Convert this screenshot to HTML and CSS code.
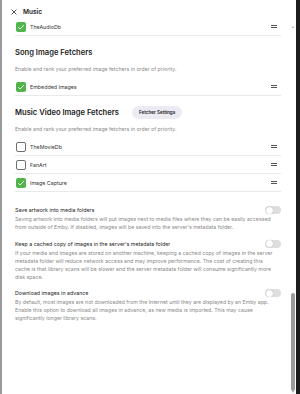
FILE: index.html
```html
<!DOCTYPE html>
<html lang="en">
<head>
    <meta charset="UTF-8">
    <meta name="viewport" content="width=device-width, initial-scale=1.0">
    <title>Music</title>
    <link rel="stylesheet" href="styles.css">
</head>
<body>
    <div class="dialog">
        <div class="dialog-header">
            <button class="close-btn" aria-label="Close">
                <svg viewBox="0 0 10 10" width="6" height="6"><path d="M1 1L9 9M9 1L1 9" stroke="#333" stroke-width="1.4" fill="none"/></svg>
            </button>
            <h1>Music</h1>
        </div>

        <div class="dialog-content">
            <div class="scroll-inner">
                <div class="fetcher-list">
                    <div class="fetcher-row">
                        <span class="checkbox checked"></span>
                        <span class="fetcher-name">TheAudioDb</span>
                        <span class="drag-handle"></span>
                    </div>
                </div>

                <div class="section">
                    <div class="section-heading">
                        <h2>Song Image Fetchers</h2>
                    </div>
                    <p class="section-desc">Enable and rank your preferred image fetchers in order of priority.</p>
                    <div class="fetcher-list">
                        <div class="fetcher-row">
                            <span class="checkbox checked"></span>
                            <span class="fetcher-name">Embedded Images</span>
                            <span class="drag-handle"></span>
                        </div>
                    </div>
                </div>

                <div class="section">
                    <div class="section-heading">
                        <h2>Music Video Image Fetchers</h2>
                        <button class="pill-btn">Fetcher Settings</button>
                    </div>
                    <p class="section-desc">Enable and rank your preferred image fetchers in order of priority.</p>
                    <div class="fetcher-list">
                        <div class="fetcher-row">
                            <span class="checkbox"></span>
                            <span class="fetcher-name">TheMovieDb</span>
                            <span class="drag-handle"></span>
                        </div>
                        <div class="fetcher-row">
                            <span class="checkbox"></span>
                            <span class="fetcher-name">FanArt</span>
                            <span class="drag-handle"></span>
                        </div>
                        <div class="fetcher-row">
                            <span class="checkbox checked"></span>
                            <span class="fetcher-name">Image Capture</span>
                            <span class="drag-handle"></span>
                        </div>
                    </div>
                </div>

                <div class="settings">
                    <div class="setting-item">
                        <div class="setting-title">Save artwork into media folders</div>
                        <span class="toggle"></span>
                        <p class="setting-desc">Saving artwork into media folders will put images next to media files where they can be easily accessed from outside of Emby. If disabled, images will be saved into the server's metadata folder.</p>
                    </div>
                    <div class="setting-item">
                        <div class="setting-title">Keep a cached copy of images in the server's metadata folder</div>
                        <span class="toggle"></span>
                        <p class="setting-desc">If your media and images are stored on another machine, keeping a cached copy of images in the server metadata folder will reduce network access and may improve performance. The cost of creating this cache is that library scans will be slower and the server metadata folder will consume significantly more disk space.</p>
                    </div>
                    <div class="setting-item">
                        <div class="setting-title">Download images in advance</div>
                        <span class="toggle"></span>
                        <p class="setting-desc">By default, most images are not downloaded from the Internet until they are displayed by an Emby app. Enable this option to download all images in advance, as new media is imported. This may cause significantly longer library scans.</p>
                    </div>
                </div>
            </div>
        </div>

        <div class="scrollbar">
            <span class="scroll-arrow up"></span>
            <span class="scroll-thumb"></span>
            <span class="scroll-arrow down"></span>
        </div>
    </div>
</body>
</html>
```

FILE: styles.css
```css
* {
    margin: 0;
    padding: 0;
    box-sizing: border-box;
}

html, body {
    height: 100%;
}

body {
    font-family: Inter, 'Noto Sans', sans-serif;
    background: linear-gradient(to right, #9a9a9a 0, #9a9a9a 50%, #1d1d1d 50%);
    overflow: hidden;
}

.dialog {
    position: relative;
    margin: 0 4px 0 2px;
    height: 100%;
    background-color: #fff;
    border-radius: 5px 5px 0 0;
    display: flex;
    flex-direction: column;
}

.dialog-header {
    height: 21px;
    flex-shrink: 0;
    display: flex;
    align-items: center;
    gap: 6px;
    padding: 2px 0 0 9px;
    background-color: #fff;
}

.close-btn {
    border: none;
    background: none;
    width: 6px;
    height: 6px;
    display: flex;
}

.dialog-header h1 {
    font-size: 6.5px;
    font-weight: 600;
    color: #222;
}

.dialog-content {
    flex: 1;
    overflow: hidden;
    padding: 0 15px 0 13px;
}

.scroll-inner {
    margin-top: -3px;
}

.fetcher-list {
    display: flex;
    flex-direction: column;
}

.fetcher-row {
    height: 18px;
    display: flex;
    align-items: center;
    gap: 4px;
    padding-left: 1px;
    border-bottom: 1px solid #e9e9e9;
}

.checkbox {
    width: 10px;
    height: 10px;
    border: 1px solid #707070;
    border-radius: 2px;
    flex-shrink: 0;
}

.checkbox.checked {
    border: none;
    background: #52b54b url("data:image/svg+xml,%3Csvg xmlns='http://www.w3.org/2000/svg' viewBox='0 0 10 10'%3E%3Cpath d='M2.4 5.2L4.2 7L7.8 3.2' stroke='white' stroke-width='1' fill='none'/%3E%3C/svg%3E") center / 10px 10px no-repeat;
}

.fetcher-name {
    flex: 1;
    font-size: 5.3px;
    color: #333;
}

.drag-handle {
    width: 6px;
    height: 2.5px;
    margin-right: 4px;
    border-top: 1px solid #555;
    border-bottom: 1px solid #555;
}

.section {
    margin-top: 10px;
}

.section-heading {
    height: 13px;
    display: flex;
    align-items: center;
    gap: 13px;
}

.section-heading h2 {
    font-size: 7.6px;
    font-weight: 600;
    color: #1c1c1c;
}

.pill-btn {
    height: 13px;
    padding: 0 7px;
    border: none;
    border-radius: 7px;
    background-color: #ecebf3;
    font-family: inherit;
    font-size: 4.6px;
    font-weight: 600;
    color: #222;
}

.section-desc {
    margin: 6px 0 5px;
    font-size: 5.2px;
    line-height: 8px;
    color: #8a8a8a;
}

.settings {
    padding-top: 14px;
    display: flex;
    flex-direction: column;
    gap: 8.5px;
}

.setting-item {
    display: grid;
    grid-template-columns: 1fr auto;
    align-items: center;
    row-gap: 1px;
}

.setting-title {
    font-size: 5.3px;
    line-height: 8px;
    color: #222;
}

.setting-desc {
    grid-column: 1 / -1;
    padding-right: 6px;
    font-size: 5.22px;
    line-height: 8px;
    color: #8a8a8a;
}

.toggle {
    width: 16px;
    height: 8px;
    border-radius: 4px;
    background-color: #dedede;
    display: flex;
    align-items: center;
    padding-left: 0.5px;
}

.toggle::before {
    content: "";
    width: 7px;
    height: 7px;
    border-radius: 50%;
    background-color: #fff;
    box-shadow: 0 0 1px rgba(0, 0, 0, 0.35);
}

/* overlay scrollbar */
.scrollbar {
    position: absolute;
    top: 26px;
    right: 0;
    bottom: 0;
    width: 6px;
    display: flex;
    flex-direction: column;
    align-items: center;
}

.scroll-arrow {
    width: 0;
    height: 0;
    border-left: 1.5px solid transparent;
    border-right: 1.5px solid transparent;
}

.scroll-arrow.up {
    border-bottom: 2px solid #a0a0a0;
}

.scroll-arrow.down {
    border-top: 2px solid #a0a0a0;
    margin-bottom: 1px;
}

.scroll-thumb {
    margin-top: auto;
    width: 4px;
    height: 98px;
    border-radius: 2px;
    background-color: #9c9c9c;
}
```
